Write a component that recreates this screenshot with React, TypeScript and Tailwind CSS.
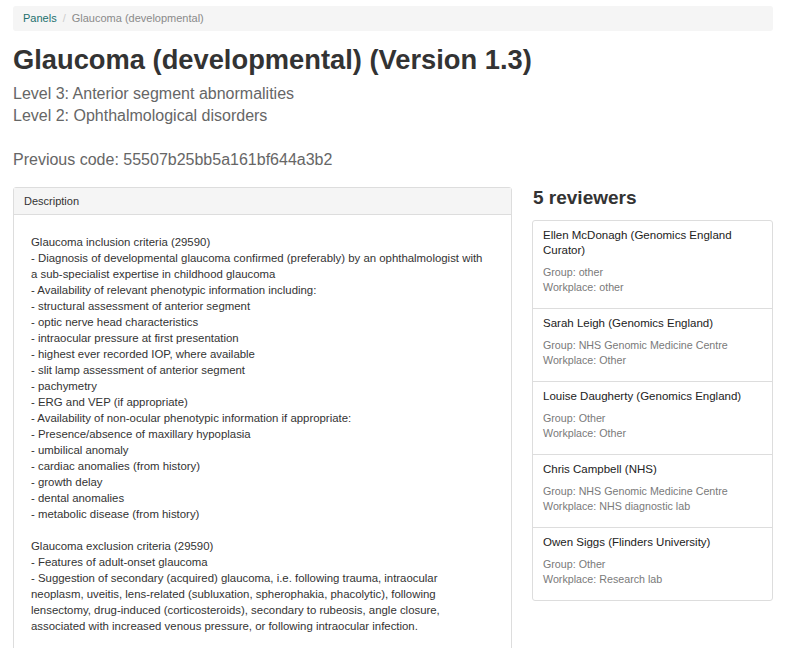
import React from 'react';

type Reviewer = {
  name: string;
  group: string;
  workplace: string;
};

const REVIEWERS: Reviewer[] = [
  { name: 'Ellen McDonagh (Genomics England Curator)', group: 'other', workplace: 'other' },
  { name: 'Sarah Leigh (Genomics England)', group: 'NHS Genomic Medicine Centre', workplace: 'Other' },
  { name: 'Louise Daugherty (Genomics England)', group: 'Other', workplace: 'Other' },
  { name: 'Chris Campbell (NHS)', group: 'NHS Genomic Medicine Centre', workplace: 'NHS diagnostic lab' },
  { name: 'Owen Siggs (Flinders University)', group: 'Other', workplace: 'Research lab' },
];

// description text, one entry per rendered line
const INCLUSION = [
  'Glaucoma inclusion criteria (29590)',
  '- Diagnosis of developmental glaucoma confirmed (preferably) by an ophthalmologist with',
  'a sub-specialist expertise in childhood glaucoma',
  '- Availability of relevant phenotypic information including:',
  '- structural assessment of anterior segment',
  '- optic nerve head characteristics',
  '- intraocular pressure at first presentation',
  '- highest ever recorded IOP, where available',
  '- slit lamp assessment of anterior segment',
  '- pachymetry',
  '- ERG and VEP (if appropriate)',
  '- Availability of non-ocular phenotypic information if appropriate:',
  '- Presence/absence of maxillary hypoplasia',
  '- umbilical anomaly',
  '- cardiac anomalies (from history)',
  '- growth delay',
  '- dental anomalies',
  '- metabolic disease (from history)',
];

const EXCLUSION = [
  'Glaucoma exclusion criteria (29590)',
  '- Features of adult-onset glaucoma',
  '- Suggestion of secondary (acquired) glaucoma, i.e. following trauma, intraocular',
  'neoplasm, uveitis, lens-related (subluxation, spherophakia, phacolytic), following',
  'lensectomy, drug-induced (corticosteroids), secondary to rubeosis, angle closure,',
  'associated with increased venous pressure, or following intraocular infection.',
];

const Breadcrumb: React.FC = () => (
  <div className="flex items-center h-[25px] px-[10px] bg-[#f5f5f5] rounded-[3px] text-[11px]">
    <span className="text-[#23706e]">Panels</span>
    <span className="px-[6px] text-[#cccccc]">/</span>
    <span className="text-[#8a8a8a]">Glaucoma (developmental)</span>
  </div>
);

const DescriptionPanel: React.FC = () => (
  <div className="border border-[#dddddd] rounded-t-[3px]">
    <div className="h-[27px] flex items-center px-[10px] bg-[#f5f5f5] border-b border-[#dddddd] text-[11px] text-[#333333]">
      Description
    </div>
    <div className="pl-[17px] pt-[19px] pb-[40px] text-[11.4px] leading-[16px] text-[#333333] whitespace-nowrap">
      {INCLUSION.map((line, i) => (
        <div key={i}>{line}</div>
      ))}
      <div className="h-[16px]" />
      {EXCLUSION.map((line, i) => (
        <div key={i}>{line}</div>
      ))}
    </div>
  </div>
);

const ReviewerList: React.FC = () => (
  <div className="border border-[#dddddd] rounded-[3px] bg-white">
    {REVIEWERS.map((r, i) => (
      <div
        key={r.name}
        className={`px-[10px] pt-[7px] pb-[13px] ${i > 0 ? 'border-t border-[#dddddd]' : ''}`}
      >
        <div className="text-[11.5px] leading-[15px] text-[#222222]">{r.name}</div>
        <div className="mt-[7px] text-[10.7px] leading-[15px] text-[#7a7a7a]">
          <div>Group: {r.group}</div>
          <div>Workplace: {r.workplace}</div>
        </div>
      </div>
    ))}
  </div>
);

export default function App() {
  return (
    <div className="min-h-screen bg-white pl-[13px] pr-[16px] pt-[6px] overflow-hidden font-['Liberation_Sans',Arial,sans-serif]">
      <Breadcrumb />

      <h1 className="mt-[12px] text-[27.3px] leading-[34px] font-bold text-[#333333]">
        Glaucoma (developmental) (Version 1.3)
      </h1>

      <div className="mt-[6px] text-[16px] leading-[22px] text-[#666666]">
        <div>Level 3: Anterior segment abnormalities</div>
        <div>Level 2: Ophthalmological disorders</div>
      </div>

      <div className="mt-[22px] text-[16px] leading-[22px] text-[#666666]">
        Previous code: 55507b25bb5a161bf644a3b2
      </div>

      <div className="mt-[16px] flex gap-[20px]">
        <div className="w-[499px] shrink-0">
          <DescriptionPanel />
        </div>
        <div className="w-[241px] shrink-0">
          <h3 className="text-[19px] leading-[22px] font-bold text-[#333333] pl-[1px]">5 reviewers</h3>
          <div className="mt-[11px]">
            <ReviewerList />
          </div>
        </div>
      </div>
    </div>
  );
}
